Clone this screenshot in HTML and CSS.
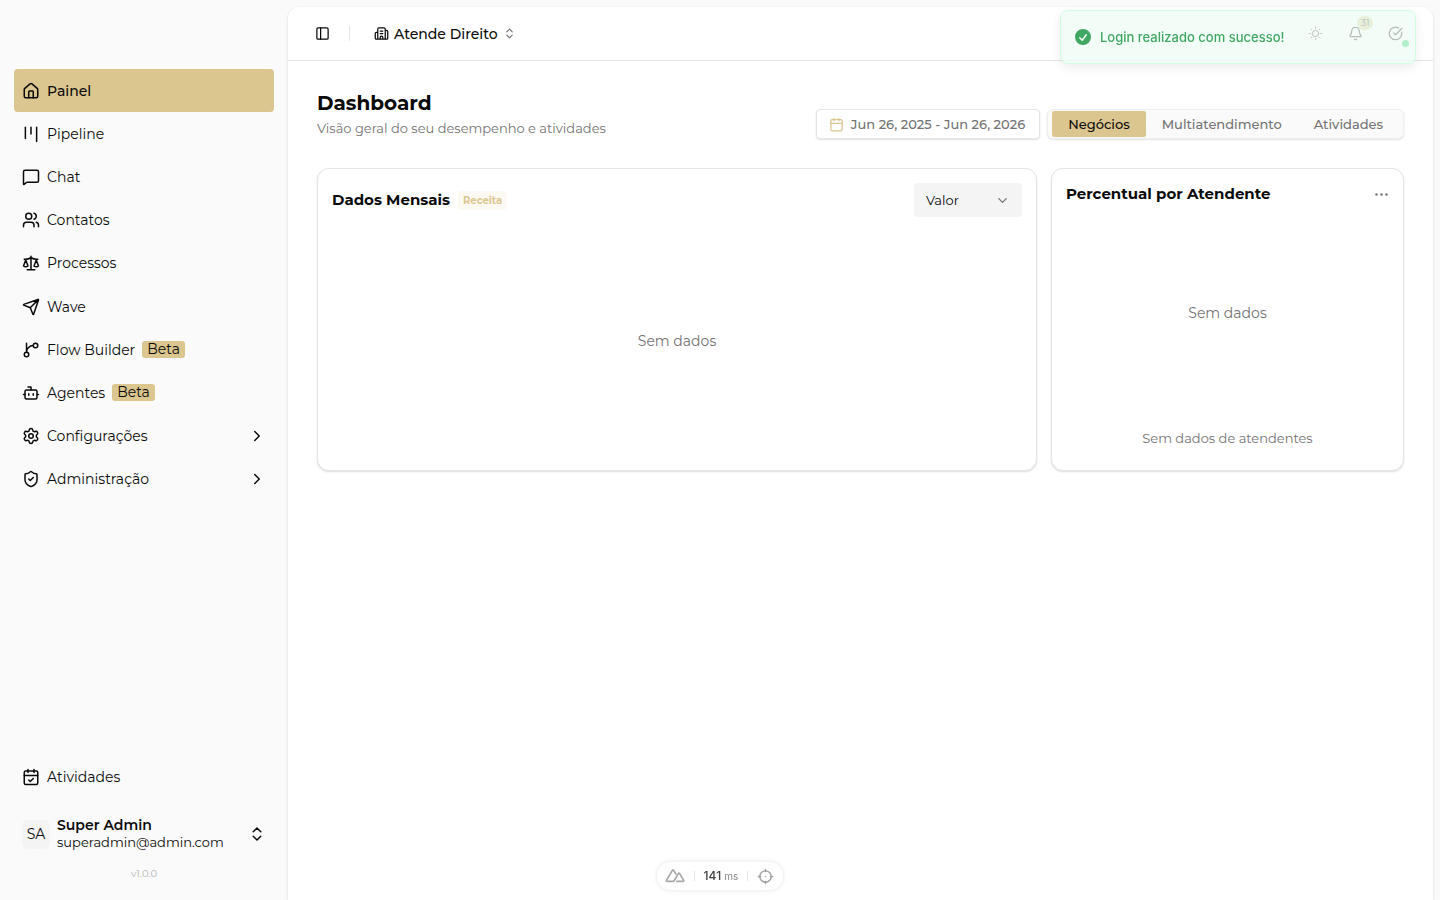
FILE: index.html
```html
<!DOCTYPE html>
<html lang="pt-BR">
<head>
<meta charset="utf-8">
<meta name="viewport" content="width=device-width, initial-scale=1">
<title>Dashboard</title>
<link rel="stylesheet" href="styles.css">
</head>
<body>
<div class="app">
  <aside class="sidebar">
    <nav class="nav" aria-label="Principal">
      <a class="nav-item active" href="#"><svg class="icon" viewBox="0 0 24 24"><path d="M15 21v-8a1 1 0 0 0-1-1h-4a1 1 0 0 0-1 1v8"/><path d="M3 10a2 2 0 0 1 .709-1.528l7-5.999a2 2 0 0 1 2.582 0l7 5.999A2 2 0 0 1 21 10v9a2 2 0 0 1-2 2H5a2 2 0 0 1-2-2z"/></svg><span>Painel</span></a>
      <a class="nav-item" href="#"><svg class="icon" viewBox="0 0 24 24"><path d="M4.5 3v15M12 3v9M19.500 3v19"/></svg><span>Pipeline</span></a>
      <a class="nav-item" href="#"><svg class="icon" viewBox="0 0 24 24"><path d="M22 17a2 2 0 0 1-2 2H6.828a2 2 0 0 0-1.414.586l-2.202 2.202A.71.71 0 0 1 2 21.286V5a2 2 0 0 1 2-2h16a2 2 0 0 1 2 2z"/></svg><span>Chat</span></a>
      <a class="nav-item" href="#"><svg class="icon" viewBox="0 0 24 24"><path d="M16 21v-2a4 4 0 0 0-4-4H6a4 4 0 0 0-4 4v2"/><circle cx="9" cy="7" r="4"/><path d="M22 21v-2a4 4 0 0 0-3-3.870M16 3.130a4 4 0 0 1 0 7.750"/></svg><span>Contatos</span></a>
      <a class="nav-item" href="#"><svg class="icon" viewBox="0 0 24 24"><path d="m16 16 3-8 3 8c-.87.65-1.920 1-3 1s-2.130-.35-3-1ZM2 16l3-8 3 8c-.87.65-1.920 1-3 1s-2.130-.35-3-1ZM7 21h10M12 3v18M3 7h2c2 0 5-1 7-2 2 1 5 2 7 2h2"/></svg><span>Processos</span></a>
      <a class="nav-item" href="#"><svg class="icon" viewBox="0 0 24 24"><path d="M14.536 21.686a.5.5 0 0 0 .937-.024l6.500-19a.496.496 0 0 0-.635-.635l-19 6.500a.5.5 0 0 0-.024.937l7.930 3.180a2 2 0 0 1 1.112 1.110zM21.854 2.147l-10.940 10.939"/></svg><span>Wave</span></a>
      <a class="nav-item" href="#"><svg class="icon" viewBox="0 0 24 24"><path d="M15 6a9 9 0 0 0-9 9V3"/><circle cx="18" cy="6" r="3"/><circle cx="6" cy="18" r="3"/></svg><span>Flow Builder</span><span class="beta">Beta</span></a>
      <a class="nav-item" href="#"><svg class="icon" viewBox="0 0 24 24"><path d="M12 8V4H8"/><rect x="4" y="8" width="16" height="12" rx="2"/><path d="M2 14h2M20 14h2M15 13v2M9 13v2"/></svg><span>Agentes</span><span class="beta">Beta</span></a>
      <a class="nav-item" href="#"><svg class="icon" viewBox="0 0 24 24"><path d="M9.671 4.136a2.340 2.340 0 0 1 4.659 0 2.340 2.340 0 0 0 3.319 1.915 2.340 2.340 0 0 1 2.330 4.033 2.340 2.340 0 0 0 0 3.831 2.340 2.340 0 0 1-2.330 4.033 2.340 2.340 0 0 0-3.319 1.915 2.340 2.340 0 0 1-4.659 0 2.340 2.340 0 0 0-3.320-1.915 2.340 2.340 0 0 1-2.330-4.033 2.340 2.340 0 0 0 0-3.831A2.340 2.340 0 0 1 6.350 6.051a2.340 2.340 0 0 0 3.319-1.915"/><circle cx="12" cy="12" r="3"/></svg><span>Configurações</span><svg class="icon end" viewBox="0 0 24 24"><path d="m9 18 6-6-6-6"/></svg></a>
      <a class="nav-item" href="#"><svg class="icon" viewBox="0 0 24 24"><path d="M20 13c0 5-3.500 7.500-7.660 8.950a1 1 0 0 1-.67-.01C7.500 20.500 4 18 4 13V6a1 1 0 0 1 1-1c2 0 4.500-1.200 6.240-2.720a1.170 1.170 0 0 1 1.520 0C14.510 3.810 17 5 19 5a1 1 0 0 1 1 1zM9 12l2 2 4-4"/></svg><span>Administração</span><svg class="icon end" viewBox="0 0 24 24"><path d="m9 18 6-6-6-6"/></svg></a>
    </nav>
    <div class="sidebar-foot">
      <a class="nav-item" href="#"><svg class="icon" viewBox="0 0 24 24"><path d="M8 2v4M16 2v4M3 10h18M9 16l2 2 4-4"/><rect x="3" y="4" width="18" height="18" rx="2"/></svg><span>Atividades</span></a>
      <button class="user" type="button">
        <span class="avatar">SA</span>
        <span class="user-text"><strong>Super Admin</strong><span>superadmin@admin.com</span></span>
        <svg class="icon end" viewBox="0 0 24 24"><path d="m7 15 5 5 5-5M7 9l5-5 5 5"/></svg>
      </button>
      <div class="version">v1.0.0</div>
    </div>
  </aside>

  <main class="main">
    <header class="topbar">
      <button class="plain" type="button" aria-label="Alternar menu"><svg class="icon small" viewBox="0 0 24 24"><rect x="3" y="3" width="18" height="18" rx="2"/><path d="M9 3v18"/></svg></button>
      <span class="divider"></span>
      <button class="plain company" type="button"><svg class="icon small" viewBox="0 0 24 24"><path d="M10 12h4M10 8h4M14 21v-3a2 2 0 0 0-4 0v3M6 10H4a2 2 0 0 0-2 2v7a2 2 0 0 0 2 2h16a2 2 0 0 0 2-2V9a2 2 0 0 0-2-2h-2M6 21V5a2 2 0 0 1 2-2h8a2 2 0 0 1 2 2v16"/></svg><span>Atende Direito</span><svg class="icon tiny" viewBox="0 0 24 24"><path d="m7 15 5 5 5-5M7 9l5-5 5 5"/></svg></button>
      <div class="actions">
        <button class="plain" type="button" aria-label="Tema"><svg class="icon small thin" viewBox="0 0 24 24"><circle cx="12" cy="12" r="5"/><path d="M12 2v1.500M12 20.500V22M2 12h1.500M20.500 12H22M4.900 4.900l1 1M18.100 18.100l1 1M4.900 19.100l1-1M18.100 5.900l1-1"/></svg></button>
        <button class="plain bell" type="button" aria-label="Notificações"><svg class="icon small" viewBox="0 0 24 24"><path d="M10.268 21a2 2 0 0 0 3.464 0M3.262 15.326A1 1 0 0 0 4 17h16a1 1 0 0 0 .74-1.673C19.410 13.956 18 12.499 18 8A6 6 0 0 0 6 8c0 4.499-1.411 5.956-2.738 7.326"/></svg><span class="count">31</span></button>
        <button class="plain status" type="button" aria-label="Status"><svg class="icon small" viewBox="0 0 24 24"><path d="M21.801 10A10 10 0 1 1 17 3.335M9 11l3 3L22 4"/></svg><span class="dot"></span></button>
      </div>
    </header>

    <div class="content">
      <div class="page-head">
        <div>
          <h1>Dashboard</h1>
          <p>Visão geral do seu desempenho e atividades</p>
        </div>
        <div class="filters">
          <button class="range" type="button"><svg class="icon small" viewBox="0 0 24 24"><path d="M8 2v4M16 2v4M3 10h18"/><rect x="3" y="4" width="18" height="18" rx="2"/></svg><span>Jun 26, 2025 - Jun 26, 2026</span></button>
          <div class="tabs" role="tablist">
            <button class="tab selected" type="button" role="tab" aria-selected="true">Negócios</button>
            <button class="tab" type="button" role="tab" aria-selected="false">Multiatendimento</button>
            <button class="tab" type="button" role="tab" aria-selected="false">Atividades</button>
          </div>
        </div>
      </div>

      <div class="cards">
        <section class="card wide">
          <div class="card-head">
            <h2>Dados Mensais</h2>
            <span class="tag">Receita</span>
            <div class="select-wrap">
              <select aria-label="Métrica"><option>Valor</option></select>
              <svg class="icon small" viewBox="0 0 24 24"><path d="m6 9 6 6 6-6"/></svg>
            </div>
          </div>
          <div class="empty">Sem dados</div>
        </section>
        <section class="card">
          <div class="card-head top">
            <h2>Percentual por Atendente</h2>
            <button class="plain more" type="button" aria-label="Mais opções"><svg class="icon small" viewBox="0 0 24 24"><circle cx="4" cy="12" r="1"/><circle cx="12" cy="12" r="1"/><circle cx="20" cy="12" r="1"/></svg></button>
          </div>
          <div class="empty">Sem dados</div>
          <div class="note">Sem dados de atendentes</div>
        </section>
      </div>
    </div>
  </main>
</div>

<div class="toast" role="status">
  <svg class="toast-icon" viewBox="0 0 20 20"><path fill-rule="evenodd" d="M10 18a8 8 0 1 0 0-16 8 8 0 0 0 0 16m3.857-9.809a.75.75 0 0 0-1.214-.882l-3.483 4.790-1.880-1.880a.75.75 0 1 0-1.060 1.061l2.500 2.500a.75.75 0 0 0 1.137-.089z"/></svg>
  <span>Login realizado com sucesso!</span>
</div>

<div class="devbar">
  <button class="plain" type="button" aria-label="Ferramentas"><svg class="peaks" viewBox="0 0 24 24"><path d="M13.500 18.500h8.200c.7 0 1-.7.700-1.200l-5-8.500c-.3-.5-.9-.5-1.200 0l-5.400 9.200c-.2.300-.5.500-.9.500H2.400c-.7 0-1-.7-.7-1.200L9 4.900c.3-.5.900-.5 1.200 0l3.200 5.500"/></svg></button>
  <span class="bar"></span>
  <span class="time">141 <small>ms</small></span>
  <span class="bar"></span>
  <button class="plain" type="button" aria-label="Inspecionar"><svg class="icon small" viewBox="0 0 24 24"><circle cx="12" cy="12" r="8"/><path d="M12 2v3M12 19v3M2 12h3M19 12h3M12 12h.01"/></svg></button>
</div>
</body>
</html>
```
FILE: styles.css
```css
* { box-sizing: border-box; }

body {
  margin: 0;
  background: #fafafa;
  color: #0a0a0a;
  font-family: Montserrat, Inter, "Noto Sans", sans-serif;
  font-size: 14px;
  line-height: 20px;
}

button, select { font: inherit; color: inherit; }
a { color: inherit; text-decoration: none; }
h1, h2, p { margin: 0; }

.icon {
  width: 18px;
  height: 18px;
  flex: none;
  fill: none;
  stroke: currentColor;
  stroke-width: 2;
  stroke-linecap: round;
  stroke-linejoin: round;
}
.icon.small { width: 15px; height: 15px; }
.icon.tiny { width: 13px; height: 13px; opacity: .6; }
.icon.thin { stroke-width: 1.5; }
.icon.end { margin-left: auto; }

.plain {
  display: flex;
  align-items: center;
  padding: 0;
  border: 0;
  background: none;
}

.app { display: flex; min-height: 100vh; }

.sidebar {
  display: flex;
  flex-direction: column;
  justify-content: space-between;
  width: 288px;
  flex: none;
  padding: 69px 14px 16px;
}
.nav {
  display: grid;
  grid-auto-rows: 1fr;
  min-height: 432px;
}
.nav-item {
  display: flex;
  align-items: center;
  gap: 7px;
  min-height: 43px;
  padding: 0 8px;
  border-radius: 4px;
}
.nav-item.active { background: #dcc68f; font-weight: 500; }
.beta {
  padding: 0 5px;
  border-radius: 3px;
  background: #dcc68f;
  font-size: 14px;
  line-height: 17px;
}
.user {
  display: flex;
  align-items: center;
  gap: 7px;
  width: 100%;
  margin-top: 11px;
  padding: 8px;
  border: 0;
  background: none;
  text-align: left;
}
.avatar {
  width: 28px;
  border-radius: 6px;
  background: #f4f4f5;
  line-height: 29px;
  text-align: center;
}
.user-text { display: grid; font-size: 13px; line-height: 17px; }
.user-text strong { font-size: 14px; font-weight: 600; }
.version {
  margin-top: 5px;
  color: #b4b4b4;
  font-size: 10px;
  line-height: 20px;
  text-align: center;
}

.main {
  flex: 1;
  min-width: 0;
  margin: 7px 7px 0 0;
  border-radius: 12px 12px 0 0;
  background: #fff;
  box-shadow: 0 1px 3px rgba(0, 0, 0, .14);
}
.topbar {
  display: flex;
  align-items: center;
  height: 54px;
  padding: 0 30px 0 27px;
  border-bottom: 1px solid #e5e5e5;
}
.divider { width: 1px; height: 15px; margin: 0 24px 0 19px; background: #e5e5e5; }
.company { gap: 5px; font-weight: 500; }
.actions { display: flex; gap: 25px; margin-left: auto; }
.bell, .status { position: relative; }
.count {
  position: absolute;
  top: -10px;
  left: 9px;
  width: 16px;
  border-radius: 7px;
  background: #dcc68f;
  font-size: 10px;
  line-height: 14px;
  text-align: center;
}
.dot {
  position: absolute;
  top: 14px;
  left: 14px;
  width: 7px;
  height: 7px;
  border-radius: 50%;
  background: #00c951;
}

.content { padding: 28px 29px; }
.page-head {
  display: flex;
  align-items: flex-end;
  justify-content: space-between;
  margin-bottom: 29px;
}
h1 { font-size: 20px; font-weight: 700; line-height: 28px; }
.page-head p { color: #737373; font-size: 13px; line-height: 22px; }
.filters { display: flex; gap: 7px; }
.range {
  display: flex;
  align-items: center;
  gap: 7px;
  height: 30px;
  padding: 0 14px 0 12px;
  border: 1px solid #e5e5e5;
  border-radius: 4px;
  background: #fff;
  box-shadow: 0 1px 2px rgba(0, 0, 0, .12);
  color: #737373;
  font-size: 13px;
  font-weight: 500;
}
.range .icon { color: #dcc68f; }
.tabs {
  display: flex;
  height: 30px;
  padding: 1px 4px;
  border: 1px solid #efefef;
  border-radius: 6px;
  background: #fafafa;
  box-shadow: 0 1px 2px rgba(0, 0, 0, .12);
}
.tab {
  padding: 0 16px;
  border: 0;
  border-radius: 2px;
  background: none;
  color: #737373;
  font-size: 13px;
  font-weight: 500;
}
.tab.selected { background: #dcc68f; color: #0a0a0a; }

.cards {
  display: grid;
  grid-template-columns: repeat(3, 1fr);
  gap: 14px;
}
.card {
  display: flex;
  flex-direction: column;
  min-height: 303px;
  padding: 14px;
  border: 1px solid #e5e5e5;
  border-radius: 12px;
  background: #fff;
  box-shadow: 0 1px 2px rgba(0, 0, 0, .14);
}
.card.wide { grid-column: span 2; }
.card-head { display: flex; align-items: center; min-height: 34px; }
.card-head.top { min-height: 22px; }
h2 { font-size: 15px; font-weight: 700; line-height: 22px; }
.tag {
  margin-left: 8px;
  padding: 0 5px;
  border-radius: 4px;
  background: #fcf9f3;
  color: #dcc68f;
  font-size: 10px;
  font-weight: 700;
  line-height: 19px;
}
.select-wrap { display: grid; align-items: center; width: 108px; margin-left: auto; }
.select-wrap > * { grid-area: 1 / 1; }
.select-wrap .icon { justify-self: end; margin-right: 12px; color: #737373; pointer-events: none; }
.select-wrap select {
  width: 100%;
  height: 34px;
  padding: 0 12px;
  border: 0;
  border-radius: 4px;
  background: #f4f4f4;
  font-size: 13px;
  appearance: none;
}
.more { margin-left: auto; color: #737373; }
.empty {
  display: grid;
  flex: 1;
  place-items: center;
  color: #737373;
}
.wide .empty { padding-top: 8px; }
.card:not(.wide) .empty { padding-bottom: 8px; }
.note {
  padding: 0 0 8px;
  color: #737373;
  font-size: 13px;
  text-align: center;
}

.toast {
  position: fixed;
  top: 10px;
  right: 24px;
  display: flex;
  align-items: center;
  gap: 7px;
  width: 356px;
  height: 54px;
  padding: 0 12px;
  border: 1px solid #bffcd9;
  border-radius: 8px;
  background: #ecfdf3;
  box-shadow: 0 4px 12px rgba(0, 0, 0, .1);
  color: #008a2e;
  font-family: Inter, sans-serif;
  font-size: 13px;
  font-weight: 500;
  opacity: .75;
}
.toast-icon { width: 20px; height: 20px; fill: currentColor; }

.devbar {
  position: fixed;
  bottom: 10px;
  left: 50%;
  display: flex;
  align-items: center;
  justify-content: space-between;
  width: 126px;
  height: 28px;
  padding: 0 9px 0 8px;
  border-radius: 14px;
  background: #fff;
  box-shadow: 0 0 5px rgba(0, 0, 0, .12);
  color: #a0a0a0;
  font-family: Inter, sans-serif;
  transform: translateX(-50%);
}
.devbar .icon.small { width: 17px; height: 17px; }
.peaks { width: 20px; height: 20px; fill: none; stroke: #a8a8a8; stroke-width: 2; stroke-linejoin: round; }
.bar { width: 1px; height: 10px; background: #e5e5e5; }
.time { color: #404040; font-size: 12px; font-weight: 500; line-height: 14px; }
.time small { color: #8a8a8a; font-size: 10px; font-weight: 400; }
```
